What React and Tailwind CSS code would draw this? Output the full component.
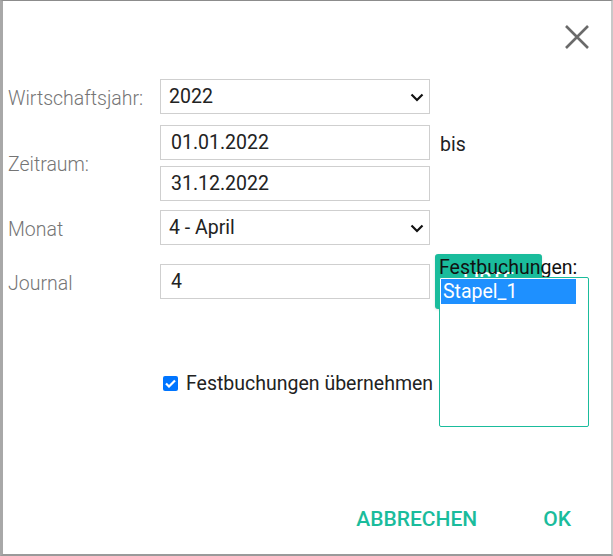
import React, { useState } from "react";

function Chevron() {
  return (
    <svg width="14" height="9" viewBox="0 0 14 9" className="absolute right-[5px] top-[13px] pointer-events-none">
      <path d="M1.5 1.5 L7 7 L12.5 1.5" fill="none" stroke="#111" strokeWidth="2.2" />
    </svg>
  );
}

function SelectBox({ value }) {
  return (
    <div className="relative w-[270px] h-[35px] border border-[#cfcfcf] bg-white">
      <div className="pl-[8px] leading-[33px] text-[19.5px] text-[#222]">{value}</div>
      <Chevron />
    </div>
  );
}

function TextBox({ value }) {
  return (
    <div className="w-[270px] h-[35px] border border-[#cfcfcf] bg-white pl-[10px] leading-[33px] text-[19.5px] text-[#222]">
      {value}
    </div>
  );
}

export default function App() {
  const [checked, setChecked] = useState(true);

  return (
    <div
      className="w-[613px] h-[556px] bg-white border-t border-t-[#8c8c8c] border-l-[3px] border-l-[#a8a8a8] border-r-2 border-r-[#c8c8c8] border-b-2 border-b-[#9a9a9a] flex flex-col"
      style={{ fontFamily: "Roboto, 'Liberation Sans', sans-serif" }}
    >
      <div className="flex justify-end pt-[23px] pr-[21px] h-[78px]">
        <svg width="26" height="26" viewBox="0 0 26 26">
          <path d="M2 2 L24 24 M24 2 L2 24" stroke="#6a6a6a" strokeWidth="2.6" fill="none" />
        </svg>
      </div>

      <div className="flex items-center">
        <div className="w-[157px] pl-[5px] pt-[4px] text-[19.5px] font-light text-[#757575]">Wirtschaftsjahr:</div>
        <SelectBox value="2022" />
      </div>

      <div className="flex items-center mt-[11px]">
        <div className="w-[157px] pl-[5px] pt-[4px] text-[19.5px] font-light text-[#757575]">Zeitraum:</div>
        <div className="flex flex-col gap-[6px]">
          <TextBox value="01.01.2022" />
          <TextBox value="31.12.2022" />
        </div>
        <div className="self-start ml-[10px] mt-[5px] text-[19.5px] text-[#222]">bis</div>
      </div>

      <div className="flex items-center mt-[9px]">
        <div className="w-[157px] pl-[5px] pt-[5px] text-[19.5px] font-light text-[#757575]">Monat</div>
        <SelectBox value="4 - April" />
      </div>

      <div className="flex mt-[8px]">
        <div className="flex flex-col w-[427px] shrink-0">
          <div className="flex items-center mt-[11px]">
            <div className="w-[157px] pl-[5px] pt-[5px] text-[19.5px] font-light text-[#757575]">Journal</div>
            <TextBox value="4" />
          </div>
          <label
            className="flex items-center mt-[70px] ml-[160px] gap-[8px] text-[19.5px] text-[#222] whitespace-nowrap cursor-pointer"
            onClick={() => setChecked(!checked)}
          >
            <span className="w-[15px] h-[15px] shrink-0 rounded-[2px] bg-[#0075ff] flex items-center justify-center">
              {checked && (
                <svg width="11" height="9" viewBox="0 0 11 9">
                  <path d="M1 4.5 L4 7.5 L10 1.5" fill="none" stroke="#fff" strokeWidth="2.2" />
                </svg>
              )}
            </span>
            Festbuchungen übernehmen
          </label>
        </div>

        <div className="relative ml-[9px] mt-[5px]">
          <div className="absolute left-[-4px] top-[-4px] w-[107px] h-[55px] rounded-[3px] bg-[#1abc9c] text-white text-[19.5px] font-medium text-center pt-[12px] shadow-sm z-0">
            LISTE
          </div>
          <div className="relative z-10 text-[19.5px] leading-[20px] text-[#111]">Festbuchungen:</div>
          <div className="relative z-10 w-[150px] h-[150px] border border-[#1abc9c] rounded-[2px] bg-white p-[1px] mt-[-1px]">
            <div className="w-[135px] h-[25px] bg-[#1e90ff] text-white text-[19.5px] leading-[25px] pl-[2px]">
              Stapel_1
            </div>
          </div>
        </div>
      </div>

      <div className="flex-1" />
      <div className="flex justify-end items-center gap-[66px] pr-[40px] pb-[19px]">
        <button className="text-[21px] font-medium text-[#1abc9c]">ABBRECHEN</button>
        <button className="text-[21px] font-medium text-[#1abc9c]">OK</button>
      </div>
    </div>
  );
}
